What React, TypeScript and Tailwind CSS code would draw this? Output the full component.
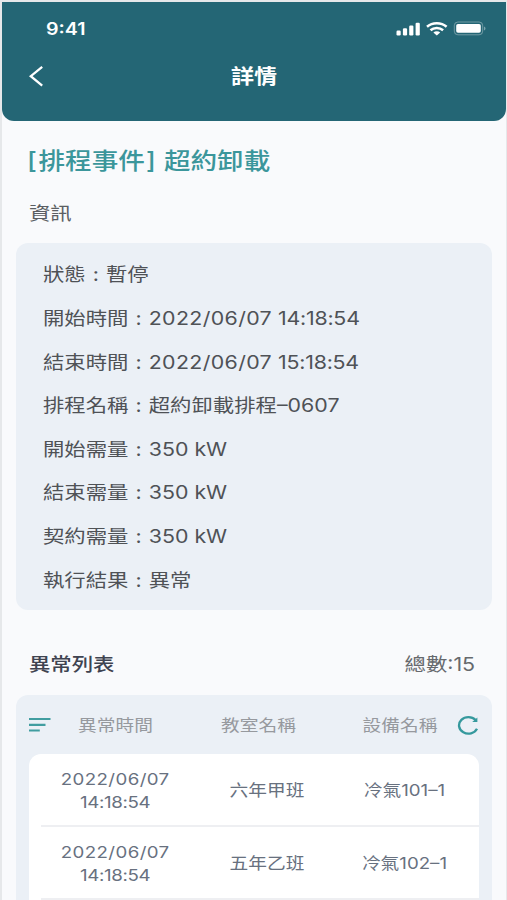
import type { ReactNode } from "react"
import clsx from "clsx"

const info = [
  { label: "狀態", value: "暫停" },
  { label: "開始時間", value: "2022/06/07", time: "14:18:54" },
  { label: "結束時間", value: "2022/06/07", time: "15:18:54" },
  { label: "排程名稱", value: "超約卸載排程–0607" },
  { label: "開始需量", value: "350 kW" },
  { label: "結束需量", value: "350 kW" },
  { label: "契約需量", value: "350 kW" },
  { label: "執行結果", value: "異常" },
]

const errors = [
  { date: "2022/06/07", time: "14:18:54", room: "六年甲班", device: "冷氣101–1" },
  { date: "2022/06/07", time: "14:18:54", room: "五年乙班", device: "冷氣102–1" },
]

// Wide-set text
function Wide({ children, className }: { children: ReactNode; className?: string }) {
  return (
    <span className={clsx("inline-block whitespace-nowrap scale-x-[1.155]", className)}>
      {children}
    </span>
  )
}

function StatusIcons() {
  return (
    <svg width="90" height="16" viewBox="0 0 90 16" fill="#fff">
      <rect x="0.5" y="9.5" width="4.2" height="5" rx="1.2" />
      <rect x="6.9" y="7.3" width="4.2" height="7.2" rx="1.2" />
      <rect x="13.2" y="4.5" width="4.2" height="10" rx="1.2" />
      <rect x="19.6" y="1.7" width="4.2" height="12.8" rx="1.2" />
      <g fill="none" stroke="#fff" strokeWidth="2.5">
        <path d="M31 5.7C36.4 1 45.2 1 50.6 5.7" />
        <path d="M34.5 9.2C38 6.1 43.6 6.1 47.1 9.2" />
      </g>
      <path d="M37.4 11.4C39.2 9.8 42.4 9.8 44.2 11.4L40.8 14.5Z" />
      <rect x="58.3" y="1" width="28.4" height="12.8" rx="3.6" fill="none" stroke="#fff" strokeOpacity="0.35" />
      <rect x="60.2" y="3" width="24.6" height="8.8" rx="1.8" />
      <path d="M88 5.4C90 6.2 90 8.6 88 9.4Z" opacity="0.4" />
    </svg>
  )
}

function Header() {
  return (
    <header className="h-[119px] rounded-b-[12px] bg-[#246675] text-white">
      {/* Status bar */}
      <div className="flex h-[54px] items-center justify-between pr-[20px] pl-[44px]">
        <Wide className="origin-left pt-[2px] text-[17px] font-semibold">9:41</Wide>
        <StatusIcons />
      </div>
      {/* Title bar */}
      <div className="grid h-[42px] grid-cols-[60px_1fr_60px] items-center">
        <button className="-mt-[2px] pl-[26px]">
          <svg width="16" height="22" viewBox="0 0 16 22" fill="none" stroke="#fff" strokeWidth="2.3">
            <path d="M14.2 1.8L2.8 11.2L14.2 20.6" />
          </svg>
        </button>
        <h1 className="text-center text-[20px] font-bold">
          <Wide>詳情</Wide>
        </h1>
      </div>
    </header>
  )
}

export default function App() {
  return (
    <div
      lang="zh-TW"
      className="h-[900px] w-[507px] overflow-hidden border-t-2 border-r border-l-2 border-[#e6e8ea] bg-[#f9fafc] font-['Inter','Noto_Sans_CJK_TC',sans-serif]"
    >
      <Header />

      <main className="pr-[14px] pl-[14px]">
        <h2 className="mt-[22px] h-[36px] pl-[11px] text-[23px] leading-[36px] font-medium text-[#3b969b]">
          <Wide className="origin-left">
            <span className="mr-[1.5px]">[</span>排程事件<span className="mr-[1px] ml-[1px]">]</span> 超約卸載
          </Wide>
        </h2>
        <p className="mt-[20px] h-[28px] pl-[13px] text-[18.5px] leading-[28px] text-[#5b5e63]">
          <Wide className="origin-left">資訊</Wide>
        </p>

        {/* Info */}
        <ul className="mt-[16px] h-[367px] rounded-[12px] bg-[#ebf0f6] pt-[10.5px] pl-[26.5px] text-[18.5px] text-[#4f5256]">
          {info.map((item) => (
            <li key={item.label} className="flex h-[43.6px] items-center">
              <Wide className="origin-left">
                {item.label}
                <span className="inline-block w-[17.5px] text-center">:</span>
                {item.time ? (
                  <>
                    <span className="tracking-[0.3px]">{item.value}</span>{" "}
                    <span className="tracking-[-0.2px]">{item.time}</span>
                  </>
                ) : (
                  item.value
                )}
              </Wide>
            </li>
          ))}
        </ul>

        {/* Error list */}
        <div className="mt-[41px] flex h-[28px] items-center justify-between pr-[17px] pl-[13px] text-[18.5px]">
          <Wide className="origin-left font-medium text-[#3f4350]">異常列表</Wide>
          <Wide className="origin-right text-[#66696d]">總數:15</Wide>
        </div>

        <section className="mt-[16px] h-[220px] rounded-t-[12px] bg-[#ebf0f6] px-[13px]">
          <div className="grid h-[59px] grid-cols-[28px_117px_169px_114px_22px] items-center pt-px text-center text-[16.2px] text-[#96999e]">
            <svg width="22" height="16" viewBox="0 0 22 16" stroke="#419da0" strokeWidth="2.2">
              <path d="M0 2H21.5M0 7.8H16.5M0 13.5H10.8" />
            </svg>
            <Wide>異常時間</Wide>
            <Wide>教室名稱</Wide>
            <Wide>設備名稱</Wide>
            <svg width="22" height="20" viewBox="0 0 22 20" fill="none" stroke="#35999d" strokeWidth="2.3">
              <path d="M20 13.8A9.4 8.3 0 1 1 18.6 5" />
              <path d="M20.4 2.4V6.9H15.2Z" fill="#35999d" stroke="none" />
            </svg>
          </div>
          <div className="h-[161px] rounded-t-[12px] bg-white pl-[12px]">
            {errors.map((row) => (
              <div
                key={row.room}
                className="grid h-[73px] grid-cols-[149px_154px_121px] items-center border-b-2 border-[#eeeff2] pt-[2px] text-center text-[16.2px] text-[#68717f]"
              >
                <div className="leading-[23px]">
                  <Wide>
                    <span className="tracking-[0.35px]">{row.date}</span>
                    <br />
                    <span className="tracking-[-0.3px]">{row.time}</span>
                  </Wide>
                </div>
                <Wide>{row.room}</Wide>
                <Wide>{row.device}</Wide>
              </div>
            ))}
          </div>
        </section>
      </main>
    </div>
  )
}
